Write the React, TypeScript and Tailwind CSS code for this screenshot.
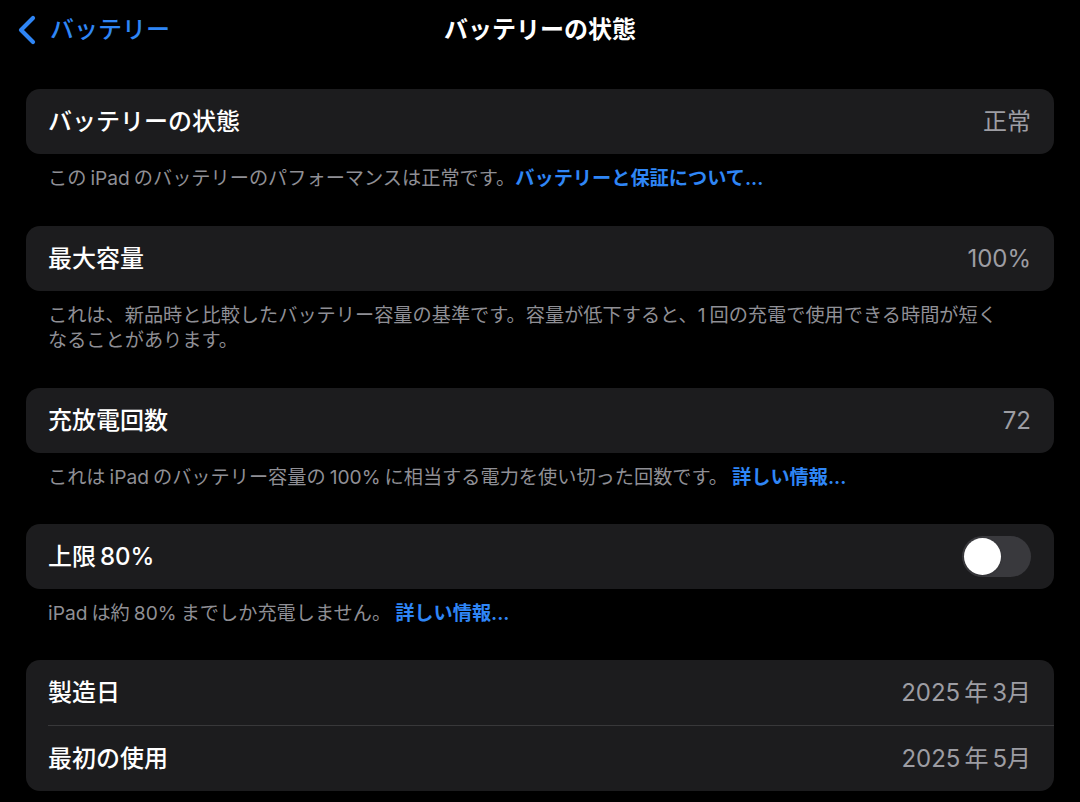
import React from "react";

const font = { fontFamily: 'Inter, "Noto Sans CJK JP", sans-serif' };

function Gap() {
  return <span className="inline-block w-[4px]" />;
}

function Row({ label, value, children }: { label: React.ReactNode; value?: React.ReactNode; children?: React.ReactNode }) {
  return (
    <div className="flex h-[65px] items-center justify-between pl-[22px] pr-[23px]">
      <div className="text-[24px] font-medium text-white">{label}</div>
      {value !== undefined && <div className="text-[24px] text-[#9d9da3]">{value}</div>}
      {children}
    </div>
  );
}

function Footer({ children, tight }: { children: React.ReactNode; tight?: boolean }) {
  return (
    <div
      className={
        tight
          ? "px-[22px] pt-[12px] pb-[34px] text-[19.2px] leading-[25px] text-[#8f8f95]"
          : "px-[22px] pt-[12px] pb-[35px] text-[19.2px] leading-[25px] text-[#8f8f95]"
      }
    >
      {children}
    </div>
  );
}

function Link({ children }: { children: React.ReactNode }) {
  return <span className="font-semibold text-[#2f86f6]">{children}</span>;
}

export default function App() {
  return (
    <div className="min-h-[802px] w-[1080px] bg-black" style={font}>
      <div className="relative flex h-[60px] items-center">
        <button className="flex items-center gap-[12px] pl-[16px] text-[#2f86f6]">
          <svg width="22" height="30" viewBox="0 0 22 30" fill="none">
            <path d="M17 3 L5 15 L17 27" stroke="currentColor" strokeWidth="4.2" strokeLinecap="round" strokeLinejoin="round" />
          </svg>
          <span className="text-[24px] font-medium">バッテリー</span>
        </button>
        <div className="absolute left-1/2 -translate-x-1/2 text-[24px] font-bold text-white">バッテリーの状態</div>
      </div>

      <div className="px-[26px] pt-[29px]">
        <div className="rounded-[14px] bg-[#1c1c1e]">
          <Row label="バッテリーの状態" value="正常" />
        </div>
        <Footer>
          この<Gap />iPad<Gap />のバッテリーのパフォーマンスは正常です。<Link>バッテリーと保証について...</Link>
        </Footer>

        <div className="rounded-[14px] bg-[#1c1c1e]">
          <Row label="最大容量" value="100%" />
        </div>
        <Footer>
          これは、新品時と比較したバッテリー容量の基準です。容量が低下すると、1<Gap />回の充電で使用できる時間が短く
          <br />
          なることがあります。
        </Footer>

        <div className="rounded-[14px] bg-[#1c1c1e]">
          <Row label="充放電回数" value="72" />
        </div>
        <Footer tight>
          これは<Gap />iPad<Gap />のバッテリー容量の<Gap />100%<Gap />に相当する電力を使い切った回数です。<Gap />
          <Link>詳しい情報...</Link>
        </Footer>

        <div className="rounded-[14px] bg-[#1c1c1e]">
          <Row label={<>上限<Gap />80%</>}>
            <div className="flex h-[41px] w-[69px] items-center rounded-full bg-[#39393d] px-[2px]">
              <div className="h-[37px] w-[37px] rounded-full bg-white shadow" />
            </div>
          </Row>
        </div>
        <Footer tight>
          iPad<Gap />は約<Gap />80%<Gap />までしか充電しません。<Gap />
          <Link>詳しい情報...</Link>
        </Footer>

        <div className="rounded-[14px] bg-[#1c1c1e]">
          <Row label="製造日" value={<>2025<Gap />年<Gap />3月</>} />
          <div className="ml-[22px] h-px bg-[#38383a]" />
          <Row label="最初の使用" value={<>2025<Gap />年<Gap />5月</>} />
        </div>
      </div>
    </div>
  );
}
